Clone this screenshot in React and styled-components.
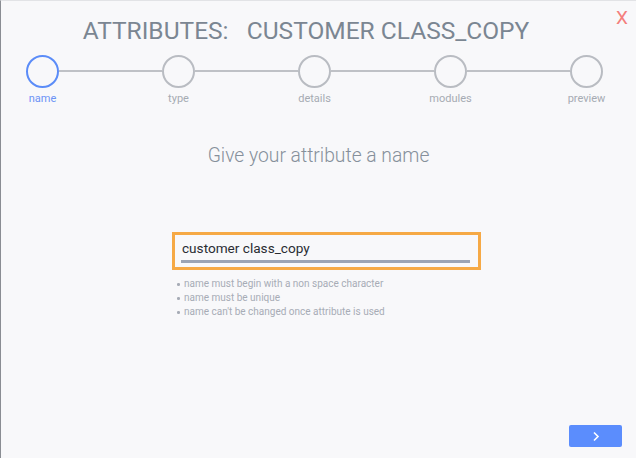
import React from "react";
import styled, { createGlobalStyle } from "styled-components";

const Global = createGlobalStyle`
  html, body { margin: 0; padding: 0; background: #f8f8fa; }
  body { font-family: Roboto, "Liberation Sans", sans-serif; }
`;

const Dialog = styled.div`
  position: relative;
  width: 636px;
  height: 458px;
  box-sizing: border-box;
  background: #f8f8fa;
  border-top: 1px solid #e2e3e6;
  border-left: 1px solid #8a8d93;
  display: flex;
  flex-direction: column;
`;

const Title = styled.h1`
  margin: 0;
  padding-top: 14px;
  padding-right: 25px;
  text-align: center;
  font-size: 24.5px;
  line-height: 32px;
  font-weight: 400;
  color: #7b8692;
  white-space: pre;
`;

const Close = styled.button`
  position: absolute;
  top: 5px;
  right: 8px;
  border: none;
  background: none;
  padding: 0;
  font-family: Roboto, "Liberation Sans", sans-serif;
  font-size: 19px;
  color: #f47e7c;
  cursor: pointer;
`;

const Stepper = styled.div`
  display: flex;
  align-items: flex-start;
  padding: 4px 33px 0 25px;
  margin-top: 4px;
`;

const Step = styled.div`
  width: 33px;
  display: flex;
  flex-direction: column;
  align-items: center;
  flex: none;
`;

const Circle = styled.div`
  width: 33px;
  height: 33px;
  box-sizing: border-box;
  border-radius: 50%;
  border: 2px solid ${(p) => (p.$active ? "#5b8cf8" : "#b9bcc2")};
`;

const StepLabel = styled.div`
  margin-top: 4px;
  font-size: 11px;
  line-height: 14px;
  white-space: nowrap;
  color: ${(p) => (p.$active ? "#6c93f6" : "#a6abb3")};
`;

const Connector = styled.div`
  flex: 1;
  height: 2px;
  margin-top: 15px;
  background: #bfc1c6;
`;

const Heading = styled.h2`
  margin: 38px 0 0;
  text-align: center;
  font-size: 19.3px;
  line-height: 24px;
  font-weight: 300;
  color: #86909b;
`;

const Form = styled.div`
  margin: 64px 0 0 171px;
  width: 309px;
`;

const InputFrame = styled.div`
  box-sizing: border-box;
  height: 38px;
  border: 3px solid #f6a945;
  padding: 4px 8px 0 6px;
`;

const Input = styled.input`
  display: block;
  width: 100%;
  box-sizing: border-box;
  border: none;
  border-bottom: 3px solid #9ca4b4;
  background: transparent;
  outline: none;
  padding: 0 0 3px 1px;
  font-family: Roboto, "Liberation Sans", sans-serif;
  font-size: 13.6px;
  line-height: 18px;
  height: 24px;
  color: #2a2d33;
`;

const Hints = styled.ul`
  margin: 7px 0 0;
  padding: 0 0 0 12px;
  list-style: none;
`;

const Hint = styled.li`
  position: relative;
  font-size: 10px;
  line-height: 14px;
  color: #a7acb6;
  &::before {
    content: "";
    position: absolute;
    left: -7px;
    top: 6px;
    width: 2.5px;
    height: 2.5px;
    background: #a7acb6;
    border-radius: 50%;
  }
`;

const Footer = styled.div`
  margin-top: auto;
  display: flex;
  justify-content: flex-end;
  padding: 0 14px 11px 0;
`;

const NextButton = styled.button`
  width: 53px;
  height: 22px;
  border: none;
  border-radius: 2px;
  background: #5b8dfd;
  display: flex;
  align-items: center;
  justify-content: center;
  padding: 0;
  cursor: pointer;
`;

const steps = ["name", "type", "details", "modules", "preview"];

export default function App() {
  return (
    <>
      <Global />
      <Dialog>
        <Title>{"ATTRIBUTES:   CUSTOMER CLASS_COPY"}</Title>
        <Close>X</Close>
        <Stepper>
          {steps.map((s, i) => (
            <React.Fragment key={s}>
              {i > 0 && <Connector />}
              <Step>
                <Circle $active={i === 0} />
                <StepLabel $active={i === 0}>{s}</StepLabel>
              </Step>
            </React.Fragment>
          ))}
        </Stepper>
        <Heading>Give your attribute a name</Heading>
        <Form>
          <InputFrame>
            <Input defaultValue="customer class_copy" />
          </InputFrame>
          <Hints>
            <Hint>name must begin with a non space character</Hint>
            <Hint>name must be unique</Hint>
            <Hint>name can't be changed once attribute is used</Hint>
          </Hints>
        </Form>
        <Footer>
          <NextButton aria-label="next">
            <svg width="8" height="11" viewBox="0 0 8 11">
              <path d="M2 1.5 L6 5.5 L2 9.5" fill="none" stroke="#fff" strokeWidth="1.6" />
            </svg>
          </NextButton>
        </Footer>
      </Dialog>
    </>
  );
}
